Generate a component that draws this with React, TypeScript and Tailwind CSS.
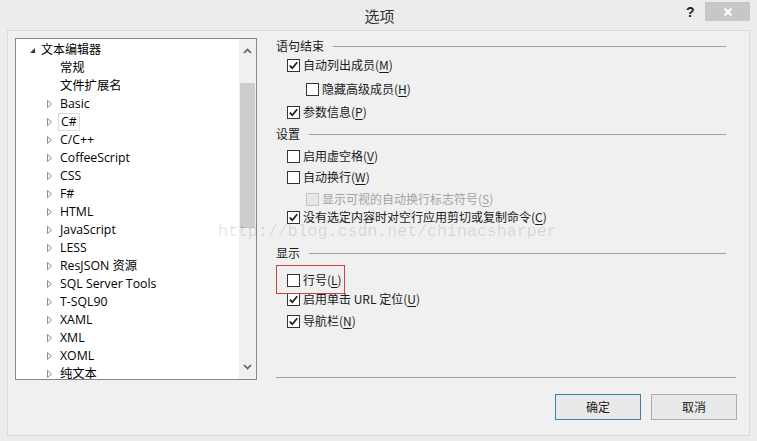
import { ReactNode } from 'react';

const treeItems: { label: string; arrow: boolean; focus?: boolean }[] = [
  { label: '常规', arrow: false },
  { label: '文件扩展名', arrow: false },
  { label: 'Basic', arrow: true },
  { label: 'C#', arrow: true, focus: true },
  { label: 'C/C++', arrow: true },
  { label: 'CoffeeScript', arrow: true },
  { label: 'CSS', arrow: true },
  { label: 'F#', arrow: true },
  { label: 'HTML', arrow: true },
  { label: 'JavaScript', arrow: true },
  { label: 'LESS', arrow: true },
  { label: 'ResJSON 资源', arrow: true },
  { label: 'SQL Server Tools', arrow: true },
  { label: 'T-SQL90', arrow: true },
  { label: 'XAML', arrow: true },
  { label: 'XML', arrow: true },
  { label: 'XOML', arrow: true },
  { label: '纯文本', arrow: true },
];

function Check({ checked, disabled }: { checked?: boolean; disabled?: boolean }) {
  return (
    <span
      className={
        disabled
          ? 'w-[13px] h-[13px] shrink-0 border border-[#c4c4c4] bg-[#e6e6e6]'
          : 'w-[13px] h-[13px] shrink-0 border border-[#333333] bg-white flex items-center justify-center'
      }
    >
      {checked && (
        <svg width="11" height="11" viewBox="0 0 11 11">
          <path d="M1.8 5.6 L4.3 8.2 L9.2 2.3" fill="none" stroke="#1a1a1a" strokeWidth="1.7" />
        </svg>
      )}
    </span>
  );
}

function Key({ k }: { k: string }) {
  return (
    <>
      (<span className="underline underline-offset-2">{k}</span>)
    </>
  );
}

function Row({
  className,
  checked,
  disabled,
  indent,
  children,
}: {
  className: string;
  checked?: boolean;
  disabled?: boolean;
  indent?: boolean;
  children: ReactNode;
}) {
  return (
    <div className={'h-[18px] flex items-center ' + className}>
      <div className={indent ? 'flex items-center gap-[3px] pl-[30px]' : 'flex items-center gap-[3px] pl-[11px]'}>
        <Check checked={checked} disabled={disabled} />
        <span className={disabled ? 'text-[#a3a3a3]' : 'text-[#1a1a1a]'}>{children}</span>
      </div>
    </div>
  );
}

function Header({ className, title }: { className: string; title: string }) {
  return (
    <div className={'h-[18px] flex items-center ' + className}>
      <span className="text-[#1a1a1a]">{title}</span>
      <div className="flex-1 h-px bg-[#a0a0a0] ml-[9px] mr-[10px]" />
    </div>
  );
}

export default function App() {
  return (
    <div className="w-[757px] h-[441px] bg-[#ececec] relative overflow-hidden font-['Open_Sans','Noto_Sans_CJK_SC',sans-serif] text-[12px] leading-none">
      {/* title bar */}
      <div className="h-[30px] flex items-center relative">
        <span className="flex-1 text-center text-[15px] text-[#333] font-['Noto_Sans_CJK_SC',sans-serif] pl-[2px]">选项</span>
        <span className="absolute left-[686px] top-[5px] text-[14px] font-bold text-[#222] font-['Liberation_Sans',sans-serif]">?</span>
        <div className="absolute left-[705px] top-[2px] w-[45px] h-[19px] bg-[#c7c7c7] flex items-center justify-center">
          <svg width="10" height="10" viewBox="0 0 10 10">
            <path d="M1.5 1.5 L8.5 8.5 M8.5 1.5 L1.5 8.5" stroke="#ffffff" strokeWidth="1.8" />
          </svg>
        </div>
      </div>

      {/* body */}
      <div className="mx-[7px] h-[406px] border border-[#d9d9d9] bg-[#f0f0f0] flex pl-[7px] pt-[7px] pr-[13px]">
        {/* tree */}
        <div className="w-[242px] h-[342px] border border-[#828790] bg-white flex shrink-0">
          <div className="flex-1 overflow-hidden pt-[2px]">
            <div className="h-[18px] flex items-center">
              <svg className="ml-[14px]" width="5" height="5" viewBox="0 0 5 5">
                <path d="M5 0 L5 5 L0 5 Z" fill="#333" />
              </svg>
              <span className="ml-[6px]">文本编辑器</span>
            </div>
            {treeItems.map((it) => (
              <div key={it.label} className="h-[18px] flex items-center">
                <div className="w-[44px] flex justify-end pr-[8px]">
                  {it.arrow && (
                    <svg width="5" height="8" viewBox="0 0 5 8">
                      <path d="M0.5 0.5 L4.5 4 L0.5 7.5 Z" fill="none" stroke="#8c8c8c" strokeWidth="1" />
                    </svg>
                  )}
                </div>
                <span
                  className={
                    it.focus
                      ? 'h-[18px] flex items-center px-[2px] -ml-[2px] border border-[#dadada] text-[12.3px]'
                      : 'whitespace-nowrap text-[12.3px]'
                  }
                >
                  {it.label}
                </span>
              </div>
            ))}
          </div>
          {/* scrollbar */}
          <div className="w-[17px] bg-[#f0f0f0] flex flex-col items-center">
            <div className="h-[24px] flex items-center justify-center">
              <svg width="9" height="6" viewBox="0 0 9 6">
                <path d="M1 5 L4.5 1.5 L8 5" fill="none" stroke="#606060" strokeWidth="1.7" />
              </svg>
            </div>
            <div className="w-[15px] h-[145px] mt-[20px] bg-[#cdcdcd]" />
            <div className="flex-1" />
            <div className="h-[24px] flex items-center justify-center">
              <svg width="9" height="6" viewBox="0 0 9 6">
                <path d="M1 1 L4.5 4.5 L8 1" fill="none" stroke="#606060" strokeWidth="1.7" />
              </svg>
            </div>
          </div>
        </div>

        {/* options */}
        <div className="flex-1 ml-[19px] flex flex-col font-['Noto_Sans_CJK_SC',sans-serif]">
          <Header className="-mt-[1px]" title="语句结束" />
          <Row className="mt-px" checked>
            自动列出成员<Key k="M" />
          </Row>
          <Row className="mt-[6px]" indent>
            隐藏高级成员<Key k="H" />
          </Row>
          <Row className="mt-[5px]" checked>
            参数信息<Key k="P" />
          </Row>
          <Header className="mt-[4px]" title="设置" />
          <Row className="mt-[4px]">
            启用虚空格<Key k="V" />
          </Row>
          <Row className="mt-[3px]">
            自动换行<Key k="W" />
          </Row>
          <Row className="mt-[4px]" indent disabled>
            显示可视的自动换行标志符号<Key k="S" />
          </Row>
          <Row className="mt-0" checked>
            没有选定内容时对空行应用剪切或复制命令<Key k="C" />
          </Row>
          <Header className="mt-[18px]" title="显示" />
          <Row className="mt-[9px]">
            行号<Key k="L" />
          </Row>
          <Row className="mt-px" checked>
            启用单击 URL 定位<Key k="U" />
          </Row>
          <Row className="mt-[4px]" checked>
            导航栏<Key k="N" />
          </Row>
          <div className="h-px bg-[#a0a0a0] mt-[47px]" />
          <div className="mt-[16px] flex justify-end gap-[10px] -mr-px">
            <button className="w-[86px] h-[26px] border border-[#3c7fb1] bg-[#e9e9e9] text-[12px] text-[#1a1a1a]">
              确定
            </button>
            <button className="w-[86px] h-[26px] border border-[#adadad] bg-[#e9e9e9] text-[12px] text-[#1a1a1a]">
              取消
            </button>
          </div>
        </div>
      </div>

      {/* overlays */}
      <div className="absolute left-[276px] top-[265px] w-[69px] h-[29px] border border-[#d0403a]" />
      <span className="absolute left-[218px] top-[222px] text-[16.6px] leading-[20px] text-[#000000]/12 font-['Liberation_Mono',monospace] whitespace-nowrap">
        http://blog.csdn.net/chinacsharper
      </span>
    </div>
  );
}
